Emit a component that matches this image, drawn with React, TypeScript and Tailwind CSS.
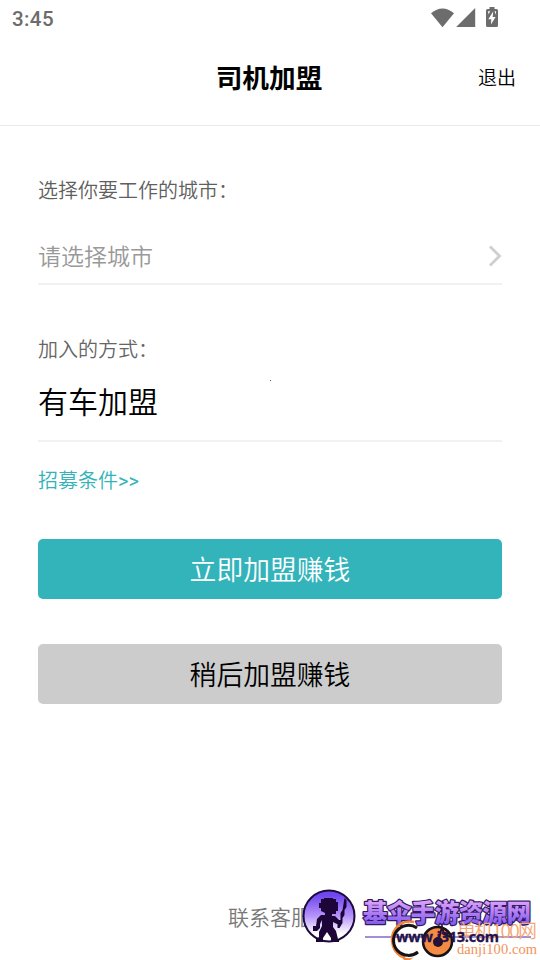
function StatusBar() {
  return (
    <div className="h-9 flex items-center justify-between pl-3 pr-10 text-[#6c6c6c]">
      <span className="pt-[2px] text-[20.5px] tracking-[0.4px] font-medium font-['Roboto',sans-serif]">3:45</span>
      <svg className="w-[70px] h-9" viewBox="430 0 70 36" fill="currentColor">
        <path d="M431 13.2Q442.500 3.800 454 13.200L442.500 27.200Z" />
        <path d="M475.200 8V27H456.200Z" />
        <path d="M489.500 7h5v2h2q1.500 0 1.500 1.500v15q0 1.500-1.500 1.500h-9q-1.500 0-1.500-1.500v-15q0-1.500 1.500-1.500h2z" />
        <path d="M493.200 11.500L488.300 19.300H491.300L490.900 24.600L495.600 17H492.700Z" fill="#fff" />
        <path d="M488 11.200h2.200l-1.700 3zM494.500 11.200h1.500v3.500z" fill="#fff" />
      </svg>
    </div>
  );
}

function Header() {
  return (
    <header className="h-[90px] grid grid-cols-3 items-center border-b border-[#ebebeb] px-6 pb-[7px]">
      <h1 className="col-start-2 pr-[2px] text-center text-[26.7px] leading-10 font-bold">司机加盟</h1>
      <button className="justify-self-end text-[19px] leading-7">退出</button>
    </header>
  );
}

function Watermark() {
  return (
    <svg className="absolute left-[300px] top-[884px] w-[240px] h-[76px]" viewBox="300 884 240 76">
      <defs>
        <linearGradient id="badge" x1="0" y1="0" x2="0" y2="1">
          <stop offset="0.1" stopColor="#7047ee" />
          <stop offset="0.5" stopColor="#b693fa" />
          <stop offset="0.85" stopColor="#fff" />
        </linearGradient>
        <linearGradient id="title" x1="0" y1="0" x2="0" y2="1">
          <stop offset="0.2" stopColor="#dfa2fa" />
          <stop offset="0.9" stopColor="#8058ee" />
        </linearGradient>
      </defs>

      <path d="M365 937H531" stroke="#8368c9" strokeWidth="1.300" />
      <circle cx="329" cy="916" r="25.500" fill="url(#badge)" stroke="#1b0a3c" strokeWidth="2" />
      <g fill="#1d0637">
        <path d="M321 899h3v-1h9v1h3v3h2v9h-2v3h-4v2h3l4 4h2v4h-4l-4-2v5l3 4 2 8 1 1v2h-8v-4l-4-6-4 6v4h-7v-3l3-2v-5l3-6v-6l-2 4v4l-3 3h-4v-5h3l1-7 4-4h4v-2l-4-2v-3h-2v-5h2z" />
        <path d="M344.500 898l2 2v7l-2 3v5l-2 3v5l-3 5h-2v-4l3-4v-7l2-3z" />
      </g>

      <text
        x="363"
        y="921.500"
        fontSize="24.500"
        fontWeight="900"
        fontFamily="'Noto Sans CJK SC', sans-serif"
        textLength="168"
        fill="url(#title)"
        stroke="#301a60"
        strokeWidth="2.400"
        strokeLinejoin="round"
        paintOrder="stroke"
      >
        基伞手游资源网
      </text>

      <path d="M414 922C398 919 389 933 393 946Q396 955 405 958" fill="none" stroke="#f58235" strokeWidth="2.500" />
      <path d="M401 956q7 4 13 1l-4 3h-6z" fill="#f58235" />
      <path d="M417 928A15 15 0 1 0 418 952" fill="none" stroke="#151317" strokeWidth="3" />
      <circle cx="437.500" cy="941.500" r="14.500" fill="#f58a43" stroke="#151317" strokeWidth="2.500" />
      <circle cx="438" cy="942" r="5" fill="#241226" />
      <path d="M438 942l4-15 2 7 6 3" fill="none" stroke="#241226" strokeWidth="2" />

      <text x="457" y="937.500" fontSize="19" fontWeight="350" fontFamily="'Noto Sans CJK SC', sans-serif" textLength="80" fill="#f6a673">
        单机100网
      </text>
      <text x="457" y="954" fontSize="14.500" fontWeight="400" fontFamily="'Liberation Serif', serif" textLength="80" fill="#f2935a">
        danji100.com
      </text>
      <text
        x="396"
        y="942"
        fontSize="14.500"
        fontWeight="700"
        fontFamily="'Open Sans', sans-serif"
        textLength="103"
        fill="#24124a"
        stroke="#24124a"
        strokeWidth="0.300"
      >
        www.j313.com
      </text>
    </svg>
  );
}

export default function App() {
  return (
    <div
      lang="zh-CN"
      className="relative w-[540px] h-[960px] overflow-hidden flex flex-col bg-white text-black font-[350] font-['Noto_Sans_CJK_SC',sans-serif]"
    >
      <StatusBar />
      <Header />

      <main className="px-[38px] flex flex-col">
        <section className="pt-[49px]">
          <p className="text-[20px] leading-[30px] text-[#5f5f5f]">选择你要工作的城市：</p>
          <div className="mt-[25px] h-[55px] pb-[3px] flex items-center justify-between border-b-2 border-[#f1f1f1]">
            <span className="text-[23px] leading-[34px] text-[#999]">请选择城市</span>
            <svg className="mt-[2px] w-[14px] h-[22px]" viewBox="0 0 14 22" fill="none" stroke="#cfcfcf" strokeWidth="2.800">
              <path d="M2 1.500L11.500 11L2 20.500" />
            </svg>
          </div>
        </section>

        <section className="relative pt-[49px]">
          <p className="text-[20px] leading-[30px] text-[#666]">加入的方式：</p>
          <span className="absolute left-[232px] top-[95px] size-px bg-[#555]" />
          <div className="mt-[14px] h-[64px] border-b-2 border-[#f1f1f1] text-[30px] leading-[44px]">有车加盟</div>
        </section>

        <a className="mt-[23px] h-[30px] text-[20px] leading-[30px] text-[#33b3b9]">
          招募条件<span className="font-normal font-['Roboto',sans-serif]">&gt;&gt;</span>
        </a>

        <button className="mt-11 h-[60px] rounded-[5px] bg-[#33b4bb] text-[26.8px] leading-10 text-white">立即加盟赚钱</button>
        <button className="mt-[45px] h-[60px] rounded-[5px] bg-[#ccc] text-[26.8px] leading-10">稍后加盟赚钱</button>
      </main>

      <footer className="mt-auto pb-7 text-center text-[21px] leading-[31px] text-[#777]">联系客服</footer>
      <Watermark />
    </div>
  );
}
